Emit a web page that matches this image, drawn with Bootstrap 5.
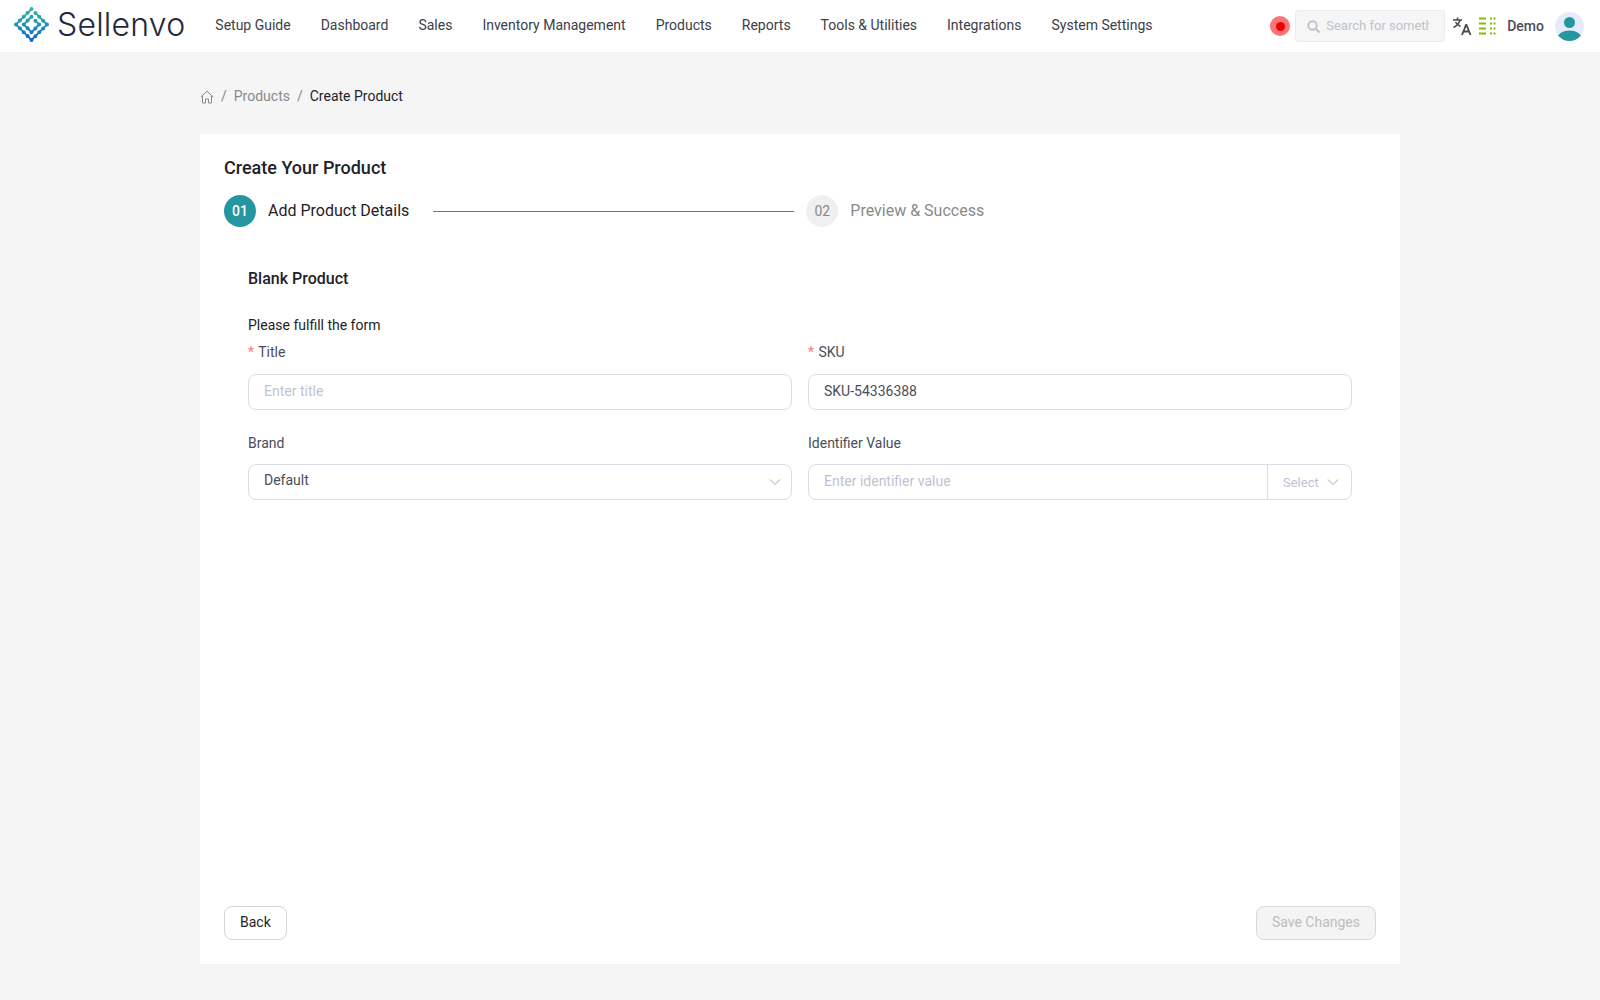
<!DOCTYPE html>
<html>
<head>
  <title>Create Product</title>
  <meta charset="UTF-8">
  <link href="https://cdn.jsdelivr.net/npm/bootstrap@5.3.2/dist/css/bootstrap.min.css" rel="stylesheet">
  <style>
    body {
      background-color: #f5f5f5;
      color: #1f2228;
      font-family: Roboto, "Liberation Sans", sans-serif;
      font-size: 14px;
    }

    .top-bar {
      background: #fff;
      height: 52px;
      padding: 0 16px 0 14px;
    }

    .brand-logo {
      margin-bottom: 3px;
    }

    .brand-name {
      font-family: Inter, "Liberation Sans", sans-serif;
      font-weight: 300;
      font-size: 32px;
      color: #23283a;
      line-height: 1;
      letter-spacing: 0.2px;
      margin-left: 7px;
      margin-bottom: 2px;
    }

    .top-links {
      gap: 30px;
      margin-left: 30px;
      margin-bottom: 2px;
    }

    .top-links .nav-link {
      padding: 0;
      color: #3c4048;
      font-size: 14px;
    }

    .rec-dot {
      width: 20px;
      height: 20px;
      border-radius: 50%;
      background: #fb7777;
      padding: 5.500px;
    }

    .rec-dot span {
      display: block;
      width: 9px;
      height: 9px;
      border-radius: 50%;
      background: #f00000;
    }

    .search-box {
      width: 150px;
      height: 32px;
      margin-left: 5px;
      background: #f6f6f6;
      border: 1px solid #ececec;
      border-radius: 4px;
      padding: 0 15px 0 11px;
      color: #bfc3cc;
      font-size: 13px;
      overflow: hidden;
      white-space: nowrap;
    }

    .search-box span {
      overflow: hidden;
      margin-left: 6px;
    }

    .lang-icon {
      margin-left: 7px;
      margin-right: 7px;
    }

    .demo-name {
      color: #4a4e57;
      font-weight: 500;
      margin-left: 10px;
      margin-right: 11px;
    }

    .page-wrap {
      width: 1200px;
      margin: 0 auto;
    }

    .crumbs {
      height: 82px;
      margin: 0;
      padding-top: 6px;
      --bs-breadcrumb-divider-color: #8a8a8a;
      --bs-breadcrumb-item-active-color: #1f2228;
      --bs-breadcrumb-margin-bottom: 0;
      --bs-breadcrumb-item-padding-x: 7px;
    }

    .crumbs a {
      color: #8a8a8a;
      text-decoration: none;
    }

    .crumbs svg {
      margin-top: 2px;
    }

    .form-card {
      min-height: 830px;
      padding: 23px 24px 24px;
      background: #fff;
    }

    .form-card h1 {
      font-size: 18px;
      font-weight: 500;
      margin: 0 0 17px;
      line-height: 21px;
    }

    .step-num {
      width: 32px;
      height: 32px;
      border-radius: 50%;
      font-size: 14px;
      font-weight: 500;
      background: #2596a1;
      color: #fff;
      flex: none;
    }

    .step-num.off {
      background: #f0f0f0;
      color: #8a8a8a;
      font-weight: 400;
    }

    .step-label {
      font-size: 16px;
      margin-left: 12px;
      white-space: nowrap;
    }

    .step-label.off {
      color: #8a8a8a;
    }

    .step-line {
      height: 1px;
      width: 361px;
      background: #2596a1;
      margin: 0 12px 0 24px;
    }

    .form-inner {
      padding: 0 24px;
    }

    .form-inner h2 {
      font-size: 16px;
      font-weight: 500;
      margin: 42px 0 27px;
      line-height: 19px;
    }

    .form-note {
      margin: 0;
      line-height: 20px;
    }

    .field-label {
      color: #4a4e5a;
      margin: 7px 0 12px;
      line-height: 20px;
    }

    .second-row .field-label {
      margin-bottom: 11px;
    }

    .req {
      color: #f47c7c;
      margin-right: 1px;
    }

    .form-control,
    .form-select,
    .input-group-text {
      height: 36px;
      font-size: 14px;
      color: #4a4e57;
      border-color: #dcdce6;
      border-radius: 8px;
      padding-left: 15px;
    }

    .form-control,
    .form-select {
      padding-top: 5px;
      padding-bottom: 8px;
    }

    .form-control::placeholder {
      color: #bfc3cf;
    }

    .second-row {
      margin-top: 16px;
    }

    .form-select,
    .id-select {
      background-image: url("data:image/svg+xml,%3csvg xmlns='http://www.w3.org/2000/svg' viewBox='0 0 12 8'%3e%3cpath fill='none' stroke='%23a0a4ad' stroke-width='1' d='M1 1.500l5 5 5-5'/%3e%3c/svg%3e");
      background-repeat: no-repeat;
      background-position: right 10px center;
      background-size: 12px 8px;
    }

    .id-select {
      width: 85px;
      background-color: #fff;
      background-position: right 12px center;
      color: #bfc3cf;
      font-size: 13px;
      padding-left: 15px;
      padding-top: 8px;
    }

    .form-foot {
      margin-top: auto;
    }

    .back-btn,
    .save-btn {
      height: 34px;
      font-size: 14px;
      border-radius: 8px;
      padding: 0 15px 2px;
      line-height: 30px;
    }

    .back-btn {
      background: #fff;
      border: 1px solid #d4d4dc;
      color: #1f2228;
    }

    .save-btn,
    .save-btn:disabled {
      background: #f4f4f4;
      border: 1px solid #d9d9d9;
      color: #bdbdbd;
      opacity: 1;
    }
  </style>
</head>
<body>

<nav class="top-bar d-flex align-items-center">
  <svg class="brand-logo" width="36" height="36" viewBox="0 0 36 36" fill="none" stroke-linecap="round" stroke-linejoin="round">
    <defs>
      <linearGradient id="logoGrad" gradientUnits="userSpaceOnUse" x1="0" y1="0" x2="0" y2="36">
        <stop offset="0" stop-color="#3bb89c"/>
        <stop offset="0.5" stop-color="#1f93ad"/>
        <stop offset="1" stop-color="#0a5fd6"/>
      </linearGradient>
    </defs>
    <g stroke="url(#logoGrad)">
      <g stroke-width="1.800">
        <path d="M17.500 2L2 17.500 17.500 33 33 17.500 21.375 5.875"/>
        <path d="M17.500 9.750L9.750 17.500 17.500 25.250 25.250 17.500 21.375 13.625"/>
      </g>
      <g stroke-width="4" stroke-dasharray="0 5.480">
        <path d="M17.500 2L2 17.500 17.500 33 33 17.500 21.375 5.875"/>
        <path d="M17.500 9.750L9.750 17.500 17.500 25.250 25.250 17.500 21.375 13.625"/>
      </g>
    </g>
  </svg>
  <span class="brand-name">Sellenvo</span>
  <ul class="nav top-links">
    <li class="nav-item"><a class="nav-link" href="#">Setup Guide</a></li>
    <li class="nav-item"><a class="nav-link" href="#">Dashboard</a></li>
    <li class="nav-item"><a class="nav-link" href="#">Sales</a></li>
    <li class="nav-item"><a class="nav-link" href="#">Inventory Management</a></li>
    <li class="nav-item"><a class="nav-link" href="#">Products</a></li>
    <li class="nav-item"><a class="nav-link" href="#">Reports</a></li>
    <li class="nav-item"><a class="nav-link" href="#">Tools &amp; Utilities</a></li>
    <li class="nav-item"><a class="nav-link" href="#">Integrations</a></li>
    <li class="nav-item"><a class="nav-link" href="#">System Settings</a></li>
  </ul>
  <div class="ms-auto d-flex align-items-center">
    <div class="rec-dot"><span></span></div>
    <div class="search-box d-flex align-items-center">
      <svg width="13" height="13" viewBox="0 0 13 13" fill="none" stroke="#bfc3cc" stroke-width="2" class="flex-shrink-0">
        <circle cx="5.500" cy="5.500" r="4.200"/>
        <path d="M8.700 8.700L12 12" stroke-linecap="round"/>
      </svg>
      <span>Search for something</span>
    </div>
    <svg class="lang-icon" width="20" height="20" viewBox="0 0 20 20" fill="none" stroke="#4a4a4a" stroke-width="1.500">
      <path d="M1 4h9M5.500 1.500V4M8 4c-1 3.500-3.500 6-6.500 7.500M3.500 6c1 2 3 3.500 5 4.500"/>
      <path d="M10 19l4-10h.5l4 10M11.500 15.500h6" stroke-width="1.800"/>
    </svg>
    <svg width="18" height="18" viewBox="0 0 18 18" fill="none" stroke="#84bd00" stroke-width="1.800">
      <path d="M0 1.500h7M0 6.500h7M0 11.500h7M0 16.500h7"/>
      <path d="M11 1.500h7M11 6.500h7M11 11.500h7M11 16.500h7" stroke-dasharray="2 1.500"/>
    </svg>
    <span class="demo-name">Demo</span>
    <svg width="29" height="29" viewBox="0 0 29 29">
      <defs><clipPath id="avatarClip"><circle cx="14.500" cy="14.500" r="14.500"/></clipPath></defs>
      <circle cx="14.500" cy="14.500" r="14.500" fill="#e5ebfb"/>
      <g fill="#2596a1" clip-path="url(#avatarClip)">
        <circle cx="14.500" cy="10.500" r="5.500"/>
        <ellipse cx="14.500" cy="26" rx="12" ry="7.500"/>
      </g>
    </svg>
  </div>
</nav>

<main class="page-wrap">
  <ol class="breadcrumb crumbs align-items-center">
    <li class="breadcrumb-item d-flex align-items-center">
      <a href="#" class="d-flex">
        <svg width="14" height="14" viewBox="0 0 14 14" fill="none" stroke="#8a8a8a" stroke-width="1">
          <path d="M.8 7L7 1.200 13.200 7M2.500 5.800V13h3V9h3v4h3V5.800"/>
        </svg>
      </a>
    </li>
    <li class="breadcrumb-item"><a href="#">Products</a></li>
    <li class="breadcrumb-item active">Create Product</li>
  </ol>

  <section class="form-card d-flex flex-column">
    <h1>Create Your Product</h1>
    <div class="d-flex align-items-center">
      <div class="step-num d-flex align-items-center justify-content-center">01</div>
      <div class="step-label">Add Product Details</div>
      <div class="step-line"></div>
      <div class="step-num off d-flex align-items-center justify-content-center">02</div>
      <div class="step-label off">Preview &amp; Success</div>
    </div>

    <div class="form-inner">
      <h2>Blank Product</h2>
      <p class="form-note">Please fulfill the form</p>
      <div class="row gx-3">
        <div class="col-6">
          <div class="field-label"><span class="req">*</span> Title</div>
          <input type="text" class="form-control" placeholder="Enter title">
        </div>
        <div class="col-6">
          <div class="field-label"><span class="req">*</span> SKU</div>
          <input type="text" class="form-control" value="SKU-54336388">
        </div>
      </div>
      <div class="row gx-3 second-row">
        <div class="col-6">
          <div class="field-label">Brand</div>
          <select class="form-select"><option>Default</option></select>
        </div>
        <div class="col-6">
          <div class="field-label">Identifier Value</div>
          <div class="input-group">
            <input type="text" class="form-control" placeholder="Enter identifier value">
            <span class="input-group-text id-select">Select</span>
          </div>
        </div>
      </div>
    </div>

    <div class="form-foot d-flex justify-content-between">
      <button type="button" class="btn back-btn">Back</button>
      <button type="button" class="btn save-btn" disabled>Save Changes</button>
    </div>
  </section>
</main>

<script src="https://cdn.jsdelivr.net/npm/bootstrap@5.3.2/dist/js/bootstrap.bundle.min.js"></script>
</body>
</html>
